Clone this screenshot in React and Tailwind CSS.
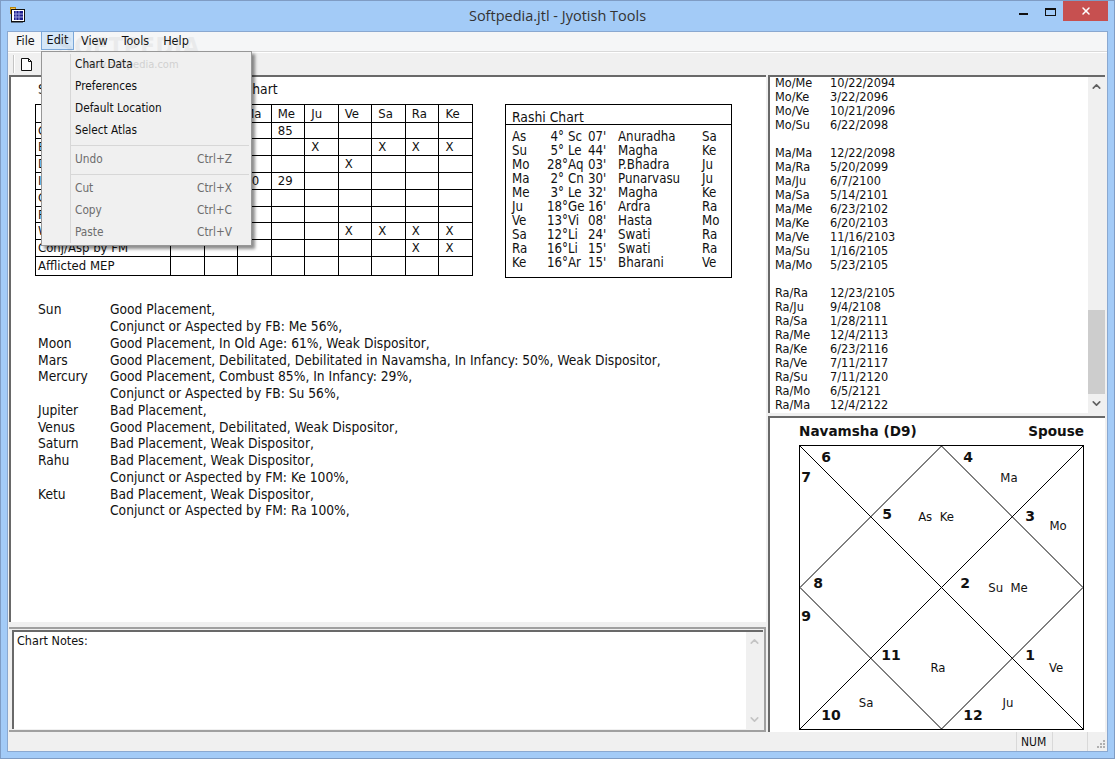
import { ChevronUp, ChevronDown, X } from "lucide-react";

const COLS = ["Su", "Mo", "Ma", "Me", "Ju", "Ve", "Sa", "Ra", "Ke"];

const TABLE = [
  ["h-[16px]", "Combust", "", "", "", "85", "", "", "", "", ""],
  ["h-[17px]", "Bad Placement", "", "", "", "", "X", "", "X", "X", "X"],
  ["h-[17px]", "Debilitated", "", "", "", "", "", "X", "", "", ""],
  ["h-[17px]", "In Infancy", "", "", "50", "29", "", "", "", "", ""],
  ["h-[17px]", "Old Age", "", "61", "", "", "", "", "", "", ""],
  ["h-[16px]", "Retrograde", "", "", "", "", "", "", "", "", ""],
  ["h-[17px]", "Weak Dispositor", "", "X", "X", "", "", "X", "X", "X", "X"],
  ["h-[17px]", "Conj/Asp by FM", "", "", "", "", "", "", "", "X", "X"],
  ["h-[19px]", "Afflicted MEP", "", "", "", "", "", "", "", "", ""],
];

const RASHI = [
  ["As", "4°", "Sc", "07'", "Anuradha", "Sa"],
  ["Su", "5°", "Le", "44'", "Magha", "Ke"],
  ["Mo", "28°", "Aq", "03'", "P.Bhadra", "Ju"],
  ["Ma", "2°", "Cn", "30'", "Punarvasu", "Ju"],
  ["Me", "3°", "Le", "32'", "Magha", "Ke"],
  ["Ju", "18°", "Ge", "16'", "Ardra", "Ra"],
  ["Ve", "13°", "Vi", "08'", "Hasta", "Mo"],
  ["Sa", "12°", "Li", "24'", "Swati", "Ra"],
  ["Ra", "16°", "Li", "15'", "Swati", "Ra"],
  ["Ke", "16°", "Ar", "15'", "Bharani", "Ve"],
];

const NOTES = [
  ["Sun", "Good Placement,"],
  ["", "Conjunct or Aspected by FB: Me 56%,"],
  ["Moon", "Good Placement, In Old Age: 61%, Weak Dispositor,"],
  ["Mars", "Good Placement, Debilitated, Debilitated in Navamsha, In Infancy: 50%, Weak Dispositor,"],
  ["Mercury", "Good Placement, Combust 85%, In Infancy: 29%,"],
  ["", "Conjunct or Aspected by FB: Su 56%,"],
  ["Jupiter", "Bad Placement,"],
  ["Venus", "Good Placement, Debilitated, Weak Dispositor,"],
  ["Saturn", "Bad Placement, Weak Dispositor,"],
  ["Rahu", "Bad Placement, Weak Dispositor,"],
  ["", "Conjunct or Aspected by FM: Ke 100%,"],
  ["Ketu", "Bad Placement, Weak Dispositor,"],
  ["", "Conjunct or Aspected by FM: Ra 100%,"],
];

const DASHA = [
  ["Mo/Me", "10/22/2094"],
  ["Mo/Ke", "3/22/2096"],
  ["Mo/Ve", "10/21/2096"],
  ["Mo/Su", "6/22/2098"],
  ["", ""],
  ["Ma/Ma", "12/22/2098"],
  ["Ma/Ra", "5/20/2099"],
  ["Ma/Ju", "6/7/2100"],
  ["Ma/Sa", "5/14/2101"],
  ["Ma/Me", "6/23/2102"],
  ["Ma/Ke", "6/20/2103"],
  ["Ma/Ve", "11/16/2103"],
  ["Ma/Su", "1/16/2105"],
  ["Ma/Mo", "5/23/2105"],
  ["", ""],
  ["Ra/Ra", "12/23/2105"],
  ["Ra/Ju", "9/4/2108"],
  ["Ra/Sa", "1/28/2111"],
  ["Ra/Me", "12/4/2113"],
  ["Ra/Ke", "6/23/2116"],
  ["Ra/Ve", "7/11/2117"],
  ["Ra/Su", "7/11/2120"],
  ["Ra/Mo", "6/5/2121"],
  ["Ra/Ma", "12/4/2122"],
];

const HOUSES = [
  ["6", 27, 11], ["4", 169, 11], ["7", 7, 31], ["5", 88, 68], ["3", 231, 70],
  ["8", 19, 137], ["2", 166, 137], ["9", 7, 170], ["11", 92, 209], ["1", 231, 209],
  ["10", 32, 269], ["12", 174, 269],
];

const PLANETS = [
  ["Ma", 210, 31], ["As  Ke", 137, 70], ["Mo", 259, 79], ["Su  Me", 209, 141],
  ["Ra", 139, 221], ["Ve", 257, 221], ["Sa", 67, 256], ["Ju", 209, 256],
];

function MenuItem({ label, keys, disabled }) {
  return (
    <div className={`flex h-[22px] items-center justify-between pl-[33px] pr-[19px] ${disabled ? "text-[#6d6d6d]" : "text-[#111]"}`}>
      <span>{label}</span>
      {keys && <span>{keys}</span>}
    </div>
  );
}

function Scrollbar({ dim, thumb }) {
  return (
    <div className={`flex h-full w-[17px] shrink-0 flex-col items-center justify-between bg-[#f0f0f0] py-[3px] ${dim ? "text-[#c4c4c4]" : "text-[#606060]"}`}>
      <ChevronUp size={13} strokeWidth={3} />
      {thumb && <div className="mt-[213px] h-[84px] w-full bg-[#cdcdcd]" />}
      <ChevronDown size={13} strokeWidth={3} />
    </div>
  );
}

function ChartDiagram() {
  return (
    <svg width="286" height="286" viewBox="0 0 286 286" className="block">
      <rect x="0.5" y="0.5" width="284" height="284" fill="white" stroke="black" />
      <path d="M1 1L284 284M284 1L1 284M142.5 1L284 142.5L142.5 284L1 142.5Z" fill="none" stroke="black" strokeWidth="1" />
      {HOUSES.map(([n, x, y]) => (
        <text key={n} x={x} y={y + 6} textAnchor="middle" fontSize="14" fontWeight="700" fontFamily="'DejaVu Sans', sans-serif" fill="#111">{n}</text>
      ))}
      {PLANETS.map(([t, x, y]) => (
        <text key={t} x={x} y={y + 6} textAnchor="middle" fontSize="13" fill="#111" xmlSpace="preserve">{t}</text>
      ))}
    </svg>
  );
}

export default function App() {
  return (
    <div className="relative flex h-[759px] w-[1115px] flex-col overflow-hidden border border-[#7f9cc4] bg-[#a3cbf7] px-[6px] pb-[6px] font-['DejaVu_Sans_Condensed','DejaVu_Sans',sans-serif] text-[11.75px] text-[#111]">
      {/* Title bar */}
      <div className="relative flex h-[30px] shrink-0 items-center justify-center pb-[1px]">
        <svg width="16" height="17" viewBox="0 0 16 17" className="absolute left-[3px] top-[6px]">
          <rect x="0.5" y="0.5" width="5" height="6" fill="#f2c14e" stroke="#b8860b" />
          <rect x="1.5" y="2.5" width="13" height="12" fill="#fff" stroke="#111" />
          <rect x="4" y="4" width="9" height="9" fill="#1c1c8c" />
          <path d="M6 4v9M9 4v9M4 7h9M4 10h9" stroke="#9aa0e0" />
          <path d="M1 15h12" stroke="#111" />
        </svg>
        <span className="font-['Open_Sans',sans-serif] text-[14.5px] text-[#333]">Softpedia.jtl - Jyotish Tools</span>
      </div>

      {/* Window controls */}
      <div className="absolute right-[6px] top-0 flex h-[21px] items-start">
        <div className="flex h-[20px] w-[27px] justify-center">
          <div className="mt-[12px] h-[2px] w-[9px] bg-[#111]" />
        </div>
        <div className="flex h-[20px] w-[26px] justify-center">
          <div className="mt-[7px] h-[8px] w-[11px] border border-t-2 border-[#111]" />
        </div>
        <div className="flex h-[20px] w-[45px] items-center justify-center bg-[#c75050] text-white">
          <X size={12} strokeWidth={3} />
        </div>
      </div>

      {/* Client */}
      <div className="relative flex min-h-0 flex-1 flex-col border border-[#8aa8d0] bg-[#f0f0f0]">
        {/* Menu bar */}
        <div className="relative flex h-[20px] shrink-0 items-center border-b border-[#d9d9d9] bg-[#f5f6f7] text-[12.5px]">
          <span className="w-[33px] pl-[8px]">File</span>
          <span className="-mt-[2px] flex h-[19px] w-[33px] items-center justify-center border border-[#7aa7d8] bg-[#d5e7f8]">Edit</span>
          <span className="px-[7px]">View</span>
          <span className="px-[7px]">Tools</span>
          <span className="px-[7px]">Help</span>
          <span className="pointer-events-none absolute left-[50px] top-[-3px] text-[24px] font-bold tracking-wide text-[#8a8a8a] opacity-10">SOFTPEDIA</span>
        </div>

        {/* Toolbar */}
        <div className="flex h-[23px] shrink-0 items-center border-t border-[#fff] pl-[5px]">
          <div className="mr-[5px] h-[18px] w-[2px] border-l border-[#c4c4c4] bg-[#fff]" />
          <svg width="13" height="15" viewBox="0 0 13 15">
            <path d="M1.5 1.5h7l3 3v9h-10z" fill="white" stroke="#111" />
            <path d="M8.5 1.5v3h3" fill="none" stroke="#111" />
          </svg>
        </div>

        {/* Panes */}
        <div className="flex min-h-0 flex-1">
          <div className="flex w-[758px] shrink-0 flex-col">
            {/* Report */}
            <div className="ml-px h-[547px] border-l-2 border-t-2 border-[#696969] bg-white pl-[24px] pt-[4px]">
              <div className="h-[23px] whitespace-nowrap pl-[3px] text-[13.75px] leading-[16px]">Strength and Weakness Analysis Chart</div>
              <div className="flex items-start">
                <table className="w-[438px] table-fixed border-collapse">
                  <colgroup>
                    <col className="w-[135px]" />
                    {COLS.map((c) => <col key={c} className="w-[33.5px]" />)}
                  </colgroup>
                  <tbody>
                    <tr className="h-[18px]">
                      <td className="border border-black" />
                      {COLS.map((c) => (
                        <td key={c} className="border border-black p-0 pl-[6px] text-[13px] leading-[14px]">{c}</td>
                      ))}
                    </tr>
                    {TABLE.map(([h, ...row]) => (
                      <tr key={row[0]} className={h}>
                        {row.map((cell, i) => (
                          <td key={i} className={`border border-black p-0 text-[13px] leading-[14px] ${i === 0 ? "pl-[2px]" : "pl-[6px]"}`}>{cell}</td>
                        ))}
                      </tr>
                    ))}
                  </tbody>
                </table>

                <div className="ml-[32px] h-[174px] w-[227px] border border-black">
                  <div className="h-[20px] border-b border-black pl-[6px] pt-[4px] text-[13.8px] leading-[16px]">Rashi Chart</div>
                  <div className="pl-[6px] pt-[5px] text-[13.2px]">
                    {RASHI.map((r) => (
                      <div key={r[0]} className="flex h-[14px] items-center whitespace-nowrap leading-[14px]">
                        <span className="w-[21px]">{r[0]}</span>
                        <span className={`w-[35px] text-right ${r[1].length === 2 ? "pr-[4px]" : ""}`}>{r[1]}</span>
                        <span className="w-[20px]">{r[2]}</span>
                        <span className="w-[30px]">{r[3]}</span>
                        <span className="w-[84px]">{r[4]}</span>
                        <span>{r[5]}</span>
                      </div>
                    ))}
                  </div>
                </div>
              </div>

              <div className="whitespace-nowrap pl-[3px] pt-[23px] text-[13.7px]">
                {NOTES.map(([name, text], i) => (
                  <div key={i} className="flex h-[16.75px] items-center leading-[16px]">
                    <span className="w-[72px] shrink-0">{name}</span>
                    <span>{text}</span>
                  </div>
                ))}
              </div>
            </div>

            {/* Chart notes */}
            <div className="ml-px mt-[5px] flex h-[105px] flex-col border-b-2 border-r-2 border-t-2 border-[#a0a0a0] bg-[#f0f0f0] p-[1px] pl-[3px]">
              <div className="flex min-h-0 flex-1 border-l-2 border-t-2 border-[#696969] bg-white">
                <div className="flex-1 pl-[3px] text-[12.5px]">Chart Notes:</div>
                <Scrollbar dim />
              </div>
            </div>
          </div>

          <div className="ml-[2px] flex min-w-0 flex-1 flex-col pr-[2px]">
            {/* Dasha list */}
            <div className="flex h-[338px] shrink-0 overflow-hidden border-l-2 border-t-2 border-[#696969] bg-white">
              <div className="-mt-px min-w-0 flex-1 pl-[5px] text-[12.6px]">
                {DASHA.map(([a, b], i) => (
                  <div key={i} className="flex h-[14px] items-center leading-[14px]">
                    <span className="w-[55px]">{a}</span>
                    <span>{b}</span>
                  </div>
                ))}
              </div>
              <Scrollbar thumb />
            </div>

            {/* Navamsha chart */}
            <div className="mt-[3px] min-h-0 flex-1 border-l-2 border-t-2 border-[#696969] bg-white pl-[29px]">
              <div className="flex w-[285px] items-center justify-between pt-[3px] font-['DejaVu_Sans',sans-serif] text-[13.6px] font-bold leading-[20px]">
                <span>Navamsha (D9)</span>
                <span>Spouse</span>
              </div>
              <div className="pt-[4px]">
                <ChartDiagram />
              </div>
            </div>
          </div>
        </div>

        {/* Status bar */}
        <div className="flex h-[19px] shrink-0 items-center justify-end bg-[#f0f0f0]">
          <div className="flex h-full w-[36px] items-center border-l border-[#d9d9d9] pl-[4px] text-[12px]">NUM</div>
          <div className="h-full w-[35px] border-l border-[#d9d9d9]" />
          <div className="flex h-full w-[20px] items-end justify-end border-l border-[#d9d9d9] pb-[2px] pr-[1px]">
            <svg width="10" height="10" viewBox="0 0 10 10" fill="#b0b0b0">
              <rect x="7" y="1" width="2" height="2" />
              <rect x="4" y="4" width="2" height="2" />
              <rect x="7" y="4" width="2" height="2" />
              <rect x="1" y="7" width="2" height="2" />
              <rect x="4" y="7" width="2" height="2" />
              <rect x="7" y="7" width="2" height="2" />
            </svg>
          </div>
        </div>

        {/* Edit menu */}
        <div className="absolute left-[33px] top-[19px] z-10 h-[195px] w-[211px] border border-[#979797] bg-[#f0f0f0] pt-[2px] shadow-[3px_3px_3px_rgba(0,0,0,0.45)]">
          <div className="absolute bottom-[2px] left-[28px] top-[2px] w-px bg-[#d7d7d7]" />
          <MenuItem label="Chart Data" />
          <MenuItem label="Preferences" />
          <MenuItem label="Default Location" />
          <MenuItem label="Select Atlas" />
          <div className="my-[3px] ml-[29px] mr-[2px] h-px bg-[#d7d7d7]" />
          <MenuItem label="Undo" keys="Ctrl+Z" disabled />
          <div className="my-[3px] ml-[29px] mr-[2px] h-px bg-[#d7d7d7]" />
          <MenuItem label="Cut" keys="Ctrl+X" disabled />
          <MenuItem label="Copy" keys="Ctrl+C" disabled />
          <MenuItem label="Paste" keys="Ctrl+V" disabled />
          <span className="pointer-events-none absolute left-[40px] top-[5px] text-[11px] text-[#888] opacity-30">www.softpedia.com</span>
        </div>
      </div>
    </div>
  );
}
